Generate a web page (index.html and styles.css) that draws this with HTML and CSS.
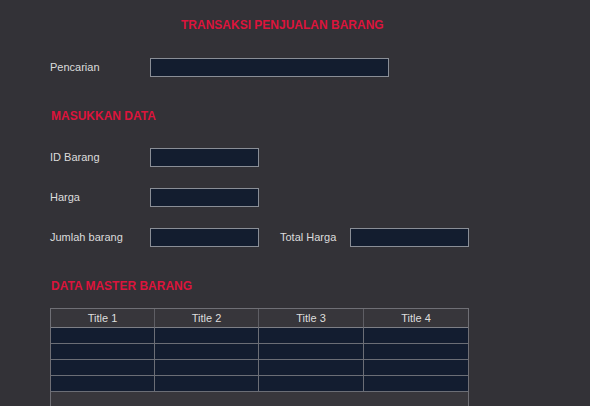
FILE: index.html
```html
<!DOCTYPE html>
<html>
<head>
<meta charset="utf-8">
<link rel="stylesheet" href="styles.css">
</head>
<body>
<div class="page">
  <div class="title">TRANSAKSI PENJUALAN BARANG</div>
  <div class="row r-search">
    <span class="label">Pencarian</span>
    <input class="field w-long" type="text">
  </div>
  <div class="heading h-input">MASUKKAN DATA</div>
  <div class="row r-first">
    <span class="label">ID Barang</span>
    <input class="field w-short" type="text">
  </div>
  <div class="row r-next">
    <span class="label">Harga</span>
    <input class="field w-short" type="text">
  </div>
  <div class="row r-next">
    <span class="label">Jumlah barang</span>
    <input class="field w-short" type="text">
    <span class="label label-total">Total Harga</span>
    <input class="field w-total" type="text">
  </div>
  <div class="heading h-master">DATA MASTER BARANG</div>
  <div class="table">
    <div class="thead">
      <div class="cell">Title 1</div>
      <div class="cell">Title 2</div>
      <div class="cell">Title 3</div>
      <div class="cell last">Title 4</div>
    </div>
    <div class="trow"><div class="cell"></div><div class="cell"></div><div class="cell"></div><div class="cell last"></div></div>
    <div class="trow"><div class="cell"></div><div class="cell"></div><div class="cell"></div><div class="cell last"></div></div>
    <div class="trow"><div class="cell"></div><div class="cell"></div><div class="cell"></div><div class="cell last"></div></div>
    <div class="trow"><div class="cell"></div><div class="cell"></div><div class="cell"></div><div class="cell last"></div></div>
  </div>
</div>
</body>
</html>
```

FILE: styles.css
```css
html, body {
  margin: 0;
  padding: 0;
  background: #333237;
  overflow: hidden;
}
body {
  font-family: "Liberation Sans", Arial, sans-serif;
  color: #dcdcdc;
  font-size: 11px;
}
.page {
  padding: 18px 0 0 50px;
  display: flex;
  flex-direction: column;
  align-items: flex-start;
}
.title {
  margin-left: 131px;
  font-size: 12px;
  line-height: 14px;
  height: 14px;
  font-weight: bold;
  color: #dc143c;
}
.heading {
  margin-left: 1px;
  font-size: 12px;
  line-height: 14px;
  height: 14px;
  font-weight: bold;
  color: #dc143c;
}
.h-input { margin-top: 32px; }
.h-master { margin-top: 32px; }
.row {
  display: flex;
  align-items: center;
  height: 19px;
}
.r-search { margin-top: 26px; }
.r-first { margin-top: 25px; }
.r-next { margin-top: 21px; }
.label {
  width: 100px;
  line-height: 13px;
  margin-top: -1px;
}
.label-total {
  width: 70px;
  margin-left: 21px;
}
.field {
  box-sizing: border-box;
  height: 19px;
  margin: 0;
  padding: 0 3px;
  background: #131d2f;
  border: 1px solid #8a8e96;
  border-radius: 0;
  outline: none;
  color: #dcdcdc;
  font: inherit;
}
.w-long { width: 239px; }
.w-short { width: 109px; }
.w-total { width: 119px; }

.table {
  margin-top: 15px;
  width: 419px;
  height: 98px;
  box-sizing: border-box;
  border: 1px solid #6f6f75;
  border-bottom: none;
  background: #38373c;
}
.thead, .trow {
  display: grid;
  grid-template-columns: 104px 104px 105px 104px;
}
.thead .cell {
  height: 19px;
  box-sizing: border-box;
  border-right: 1px solid #5e5e64;
  border-bottom: 1px solid #7d7f86;
  text-align: center;
  line-height: 18px;
  color: #dedede;
  background: #37363b;
}
.trow .cell {
  height: 16px;
  box-sizing: border-box;
  border-right: 1px solid #6b6e76;
  border-bottom: 1px solid #6b6e76;
  background: #131d30;
}
.thead .cell.last, .trow .cell.last {
  border-right: none;
}
```
